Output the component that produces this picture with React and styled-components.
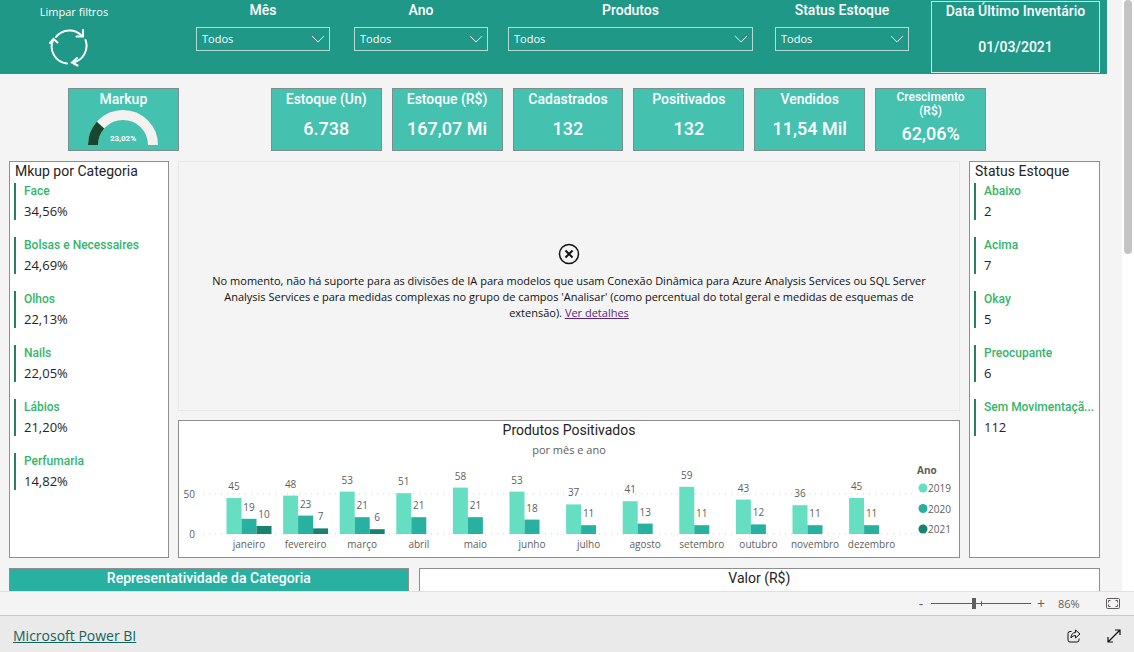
import React, { useState } from 'react';
import styled, { createGlobalStyle } from 'styled-components';

const GlobalStyle = createGlobalStyle`
  *,
  *::before,
  *::after {
    box-sizing: border-box;
  }

  :root {
    --din: Roboto, sans-serif;
    --segoe: 'Open Sans', sans-serif;
    --header: #1f9888;
    --card: #44c1af;
    --teal: #28b0a0;
    --mint: #66dec2;
    --dark-teal: #1a8070;
    --canvas: #f4f4f4;
    --frame: #8e8e8e;
    --label-green: #34b56b;
  }

  body {
    margin: 0;
    font-family: var(--segoe);
    font-size: 11px;
    color: #252423;
  }

  button,
  select {
    margin: 0;
    padding: 0;
    border: 0;
    background: none;
    font: inherit;
    color: inherit;
  }
`;

const Page = styled.div`
  display: flex;
  flex-direction: column;
  height: 100vh;
  overflow: hidden;
  background: var(--canvas);
`;

const Viewport = styled.div`
  display: flex;
  flex: 1;
  min-height: 0;
  border-bottom: 1px solid #e0e0e0;
`;

const Report = styled.main`
  flex: 1;
  min-width: 0;
  overflow: hidden;
`;

const ScrollTrack = styled.div`
  flex: none;
  width: 12px;
  padding: 0 2px;
  background: #fff;
`;

const ScrollThumb = styled.div`
  height: 43%;
  border-radius: 4px;
  background: #c4c4c4;
`;

const Header = styled.header`
  display: flex;
  height: 74px;
  margin-right: 15px;
  padding-right: 7px;
  color: #fff;
  background: var(--header);
`;

const ClearFilters = styled.button`
  display: flex;
  flex: 148 1 0;
  flex-direction: column;
  align-items: center;
  gap: 7px;
  padding-top: 4px;
  line-height: 16px;
  cursor: pointer;

  svg {
    margin-right: 10px;
  }
`;

const Slicer = styled.label`
  display: flex;
  flex: ${({ $grow }) => $grow} 1 0;
  flex-direction: column;
  gap: 8px;
  min-width: 0;
  margin-left: ${({ $space }) => $space}px;
  padding-top: 1px;
  font: 500 14px/18px var(--din);
  text-align: center;
`;

const SelectBox = styled.span`
  display: grid;
  grid-template-columns: 1fr 18px;
  align-items: center;
  height: 24px;
  border: 1px solid #b4dcd6;

  svg {
    grid-area: 1 / 2;
    pointer-events: none;
  }
`;

const Select = styled.select`
  grid-area: 1 / 1 / 2 / 3;
  height: 22px;
  padding-left: 5px;
  font: 11px/22px var(--segoe);
  appearance: none;

  option {
    color: #252423;
  }
`;

const DateCard = styled.section`
  flex: 167 1 0;
  margin: 1px 0 1px 22px;
  border: 1px solid #cfe9e5;
  font: 500 14px/18px var(--din);
  text-align: center;

  h2,
  p {
    margin: 0;
    font: inherit;
  }

  p {
    margin-top: 18px;
  }
`;

const Cards = styled.div`
  display: flex;
  gap: 10px;
  padding: 14px 136px 10px 68px;
`;

const Card = styled.section`
  display: flex;
  flex: 109 1 0;
  flex-direction: column;
  align-items: center;
  min-width: 0;
  height: 63px;
  border: 1px solid #7b8f8c;
  color: #fff;
  background: var(--card);
`;

const CardSpace = styled.div`
  flex: 72 1 0;
`;

const CardTitle = styled.h2`
  margin: 0;
  padding: 1px 16px 0;
  font: 500 ${({ $small }) => ($small ? '12px/14px' : '14px/18px')} var(--din);
  text-align: center;
  white-space: ${({ $small }) => ($small ? 'normal' : 'nowrap')};
`;

const CardValue = styled.p`
  display: flex;
  flex: 1;
  align-items: center;
  margin: 0;
  font: 500 18px/20px var(--din);
`;

const Columns = styled.div`
  display: grid;
  grid-template-columns: 160fr 782fr 131fr;
  gap: 9px;
  padding: 0 22px 0 9px;
`;

const Middle = styled.div`
  display: grid;
  grid-template-rows: 250px auto;
  gap: 9px;
  min-width: 0;
`;

const Panel = styled.section`
  min-width: 0;
  border: 1px solid var(--frame);
  background: #fff;
`;

const PanelTitle = styled.h2`
  margin: 0;
  padding-left: ${({ $center }) => ($center ? 0 : 5)}px;
  font: 400 14px/18px var(--din);
  text-align: ${({ $center }) => ($center ? 'center' : 'left')};
`;

const ItemList = styled.dl`
  display: flex;
  flex-direction: column;
  gap: 17px;
  margin: 3px 0 0 4px;
`;

const Item = styled.div`
  height: 37px;
  padding-left: 8px;
  border-left: 2px solid #2b7d63;

  dt {
    font: 500 12px/17px var(--din);
    color: var(--label-green);
    white-space: nowrap;
  }

  dd {
    margin: 0;
    font-size: 13px;
    line-height: 22px;
  }
`;

const Notice = styled.section`
  display: flex;
  flex-direction: column;
  align-items: center;
  justify-content: center;
  padding: 0 18px 8px;
  border: 1px solid #e8e8e8;
  line-height: 16px;
  color: #111;
  text-align: center;

  p {
    margin: 8px 0 0;
  }

  a {
    color: #5c2482;
  }
`;

const Subtitle = styled.p`
  margin: 0;
  line-height: 22px;
  color: #605e5c;
  text-align: center;
`;

const Chart = styled.svg`
  display: block;
  width: 100%;
  font-family: var(--segoe);
  font-size: 10px;
  fill: #605e5c;
`;

const Tables = styled.div`
  display: grid;
  grid-template-columns: 400fr 682fr;
  gap: 10px;
  padding: 10px 22px 0 9px;
`;

const TableTitle = styled.h2`
  height: 40px;
  margin: 0;
  border: 1px solid var(--frame);
  font: ${({ $filled }) => ($filled ? 500 : 400)} 14px/18px var(--din);
  color: ${({ $filled }) => ($filled ? '#fff' : '#252423')};
  background: ${({ $filled }) => ($filled ? 'var(--teal)' : '#fff')};
  text-align: center;
`;

const ZoomBar = styled.div`
  display: flex;
  align-items: center;
  justify-content: flex-end;
  height: 23px;
  padding-right: 14px;
  color: #605e5c;
`;

const ZoomButton = styled.button`
  width: 20px;
  font-size: 14px;
  line-height: 20px;
  cursor: pointer;
`;

const ZoomRange = styled.input`
  width: 100px;
  height: 12px;
  margin: 0;
  appearance: none;
  background:
    linear-gradient(#605e5c, #605e5c) 50px 50% / 1px 5px no-repeat,
    linear-gradient(#605e5c, #605e5c) 0 50% / 100% 1px no-repeat;

  &::-webkit-slider-thumb {
    width: 4px;
    height: 11px;
    appearance: none;
    background: #605e5c;
  }
`;

const ZoomValue = styled.output`
  width: 55px;
  padding-left: 7px;
`;

const IconButton = styled.button`
  display: flex;
  cursor: pointer;
`;

const Footer = styled.footer`
  display: flex;
  align-items: center;
  gap: 26px;
  height: 37px;
  padding: 4px 13px 0;
  border-top: 1px solid #c8c8c8;
  background: #eaeaea;

  a {
    margin-right: auto;
    font-size: 14px;
    line-height: 18px;
    font-weight: 500;
    color: #14625a;
  }
`;

const slicers = [
  { label: 'Mês', grow: 134, space: 48 },
  { label: 'Ano', grow: 134, space: 24 },
  { label: 'Produtos', grow: 245, space: 20 },
  { label: 'Status Estoque', grow: 134, space: 22 },
];

const cards = [
  { title: 'Estoque (Un)', value: '6.738' },
  { title: 'Estoque (R$)', value: '167,07 Mi' },
  { title: 'Cadastrados', value: '132' },
  { title: 'Positivados', value: '132' },
  { title: 'Vendidos', value: '11,54 Mil' },
  { title: 'Crescimento (R$)', value: '62,06%', small: true },
];

const markups = [
  ['Face', '34,56%'],
  ['Bolsas e Necessaires', '24,69%'],
  ['Olhos', '22,13%'],
  ['Nails', '22,05%'],
  ['Lábios', '21,20%'],
  ['Perfumaria', '14,82%'],
];

const stockStatus = [
  ['Abaixo', '2'],
  ['Acima', '7'],
  ['Okay', '5'],
  ['Preocupante', '6'],
  ['Sem Movimentaçã...', '112'],
];

const months = [
  ['janeiro', 45, 19, 10],
  ['fevereiro', 48, 23, 7],
  ['março', 53, 21, 6],
  ['abril', 51, 21],
  ['maio', 58, 21],
  ['junho', 53, 18],
  ['julho', 37, 11],
  ['agosto', 41, 13],
  ['setembro', 59, 11],
  ['outubro', 43, 12],
  ['novembro', 36, 11],
  ['dezembro', 45, 11],
];

const years = ['2019', '2020', '2021'];
const colors = ['var(--mint)', 'var(--teal)', 'var(--dark-teal)'];

const RefreshIcon = () => (
  <svg
    width="40"
    height="40"
    viewBox="0 0 40 40"
    fill="none"
    stroke="#fff"
    strokeWidth="2"
    strokeLinecap="round"
  >
    <path d="M7 10A17 17 0 0 1 33 9M34 3v6.500h-6.500" />
    <path d="M36.500 13A17 17 0 0 1 24 35.500M28 31l-5 4.500 5.500 3" />
    <path d="M18 36.500A17 17 0 0 1 4 13M1 16l3.500-4 4 3.500" />
  </svg>
);

const Chevron = () => (
  <svg width="14" height="8" viewBox="0 0 14 8" fill="none" stroke="#fff">
    <path d="M1 1l6 6 6-6" />
  </svg>
);

const Gauge = () => (
  <svg width="72" height="38" viewBox="0 0 72 38" role="img" aria-label="23,02%">
    <path d="M6 37A30 30 0 0 1 66 37" fill="none" stroke="#f3f2f1" strokeWidth="10" />
    <path
      d="M6 37A30 30 0 0 1 66 37"
      fill="none"
      stroke="#15482f"
      strokeWidth="10"
      pathLength="100"
      strokeDasharray="23.02 100"
    />
    <text
      x="36"
      y="33"
      fill="#fff"
      fontFamily="Roboto, sans-serif"
      fontSize="8"
      fontWeight="700"
      textAnchor="middle"
    >
      23,02%
    </text>
  </svg>
);

const ErrorIcon = () => (
  <svg width="22" height="22" viewBox="0 0 22 22" fill="none" stroke="#111" strokeWidth="2">
    <circle cx="11" cy="11" r="9.5" strokeWidth="1.5" />
    <path d="M7.5 7.5l7 7M14.5 7.5l-7 7" />
  </svg>
);

const FitIcon = () => (
  <svg width="14" height="11" viewBox="0 0 14 11" fill="none" stroke="#605e5c">
    <rect x="0.5" y="0.5" width="13" height="10" rx="1" />
    <path d="M2.5 4.5v-2h2M9.5 2.5h2v2M11.5 6.5v2h-2M4.5 8.5h-2v-2" />
  </svg>
);

const ShareIcon = () => (
  <svg width="14" height="14" viewBox="0 0 14 14" fill="none" stroke="#111" strokeLinejoin="round">
    <path d="M4.500 2.500H3a2 2 0 0 0-2 2V11a2 2 0 0 0 2 2h7a2 2 0 0 0 2-2v-1.500" />
    <path d="M8.500 1L13 5 8.500 9V6.500C6.500 6.500 5 7.500 4 9c0-3 1.500-5.500 4.500-5.500z" />
  </svg>
);

const ExpandIcon = () => (
  <svg width="14" height="14" viewBox="0 0 14 14" fill="none" stroke="#111" strokeWidth="1.2">
    <path d="M1 13L13 1M8 1h5v5M1 8v5h5" />
  </svg>
);

const BASE = 73;
const UNIT = 0.8;

const ProductsChart = () => (
  <Chart viewBox="0 0 780 96" role="img" aria-label="Produtos Positivados por mês e ano">
    {[50, 0].map(tick => (
      <g key={tick}>
        <line
          x1="24"
          x2="738"
          y1={BASE - tick * UNIT}
          y2={BASE - tick * UNIT}
          stroke="#cfcfcf"
          strokeDasharray="1 5"
        />
        <text x="16" y={BASE + 4 - tick * UNIT} textAnchor="end">
          {tick}
        </text>
      </g>
    ))}
    {months.map(([name, ...values], month) => {
      const left = 47.5 + month * 56.6;
      return (
        <g key={name}>
          {values.map((value, i) => (
            <g key={years[i]}>
              <rect
                x={left + i * 15}
                y={BASE - value * UNIT}
                width="15"
                height={value * UNIT}
                fill={colors[i]}
              />
              <text x={left + i * 15 + 7.5} y={BASE - 8 - value * UNIT} textAnchor="middle">
                {value}
              </text>
            </g>
          ))}
          <text x={left + 22.5} y="87" textAnchor="middle">
            {name}
          </text>
        </g>
      );
    })}
    <text x="738" y="13" fontWeight="700">
      Ano
    </text>
    {years.map((year, i) => (
      <g key={year}>
        <circle cx="744" cy={27 + i * 20.5} r="4.5" fill={colors[i]} />
        <text x="749" y={31 + i * 20.5}>
          {year}
        </text>
      </g>
    ))}
  </Chart>
);

const ItemPanel = ({ title, items }) => (
  <Panel>
    <PanelTitle>{title}</PanelTitle>
    <ItemList>
      {items.map(([name, value]) => (
        <Item key={name}>
          <dt>{name}</dt>
          <dd>{value}</dd>
        </Item>
      ))}
    </ItemList>
  </Panel>
);

const App = () => {
  const [zoom, setZoom] = useState(86);

  return (
    <Page>
      <GlobalStyle />
      <Viewport>
        <Report>
          <Header>
            <ClearFilters type="button">
              Limpar filtros
              <RefreshIcon />
            </ClearFilters>
            {slicers.map(({ label, grow, space }) => (
              <Slicer key={label} $grow={grow} $space={space}>
                {label}
                <SelectBox>
                  <Select>
                    <option>Todos</option>
                  </Select>
                  <Chevron />
                </SelectBox>
              </Slicer>
            ))}
            <DateCard>
              <h2>Data Último Inventário</h2>
              <p>01/03/2021</p>
            </DateCard>
          </Header>

          <Cards>
            <Card>
              <CardTitle>Markup</CardTitle>
              <Gauge />
            </Card>
            <CardSpace />
            {cards.map(({ title, value, small }) => (
              <Card key={title}>
                <CardTitle $small={small}>{title}</CardTitle>
                <CardValue>{value}</CardValue>
              </Card>
            ))}
          </Cards>

          <Columns>
            <ItemPanel title="Mkup por Categoria" items={markups} />
            <Middle>
              <Notice>
                <ErrorIcon />
                <p>
                  No momento, não há suporte para as divisões de IA para modelos que usam Conexão
                  Dinâmica para Azure Analysis Services ou SQL Server Analysis Services e para
                  medidas complexas no grupo de campos 'Analisar' (como percentual do total geral e
                  medidas de esquemas de extensão). <a href="#detalhes">Ver detalhes</a>
                </p>
              </Notice>
              <Panel>
                <PanelTitle $center>Produtos Positivados</PanelTitle>
                <Subtitle>por mês e ano</Subtitle>
                <ProductsChart />
              </Panel>
            </Middle>
            <ItemPanel title="Status Estoque" items={stockStatus} />
          </Columns>

          <Tables>
            <TableTitle $filled>Representatividade da Categoria</TableTitle>
            <TableTitle>Valor (R$)</TableTitle>
          </Tables>
        </Report>
        <ScrollTrack>
          <ScrollThumb />
        </ScrollTrack>
      </Viewport>

      <ZoomBar>
        <ZoomButton type="button" aria-label="Reduzir" onClick={() => setZoom(zoom - 1)}>
          -
        </ZoomButton>
        <ZoomRange
          type="range"
          aria-label="Zoom"
          min="0"
          max="200"
          value={zoom}
          onChange={e => setZoom(Number(e.target.value))}
        />
        <ZoomButton type="button" aria-label="Ampliar" onClick={() => setZoom(zoom + 1)}>
          +
        </ZoomButton>
        <ZoomValue>{zoom}%</ZoomValue>
        <IconButton type="button" aria-label="Ajustar à página">
          <FitIcon />
        </IconButton>
      </ZoomBar>

      <Footer>
        <a href="#powerbi">Microsoft Power BI</a>
        <IconButton type="button" aria-label="Compartilhar">
          <ShareIcon />
        </IconButton>
        <IconButton type="button" aria-label="Tela inteira">
          <ExpandIcon />
        </IconButton>
      </Footer>
    </Page>
  );
};

export default App;
